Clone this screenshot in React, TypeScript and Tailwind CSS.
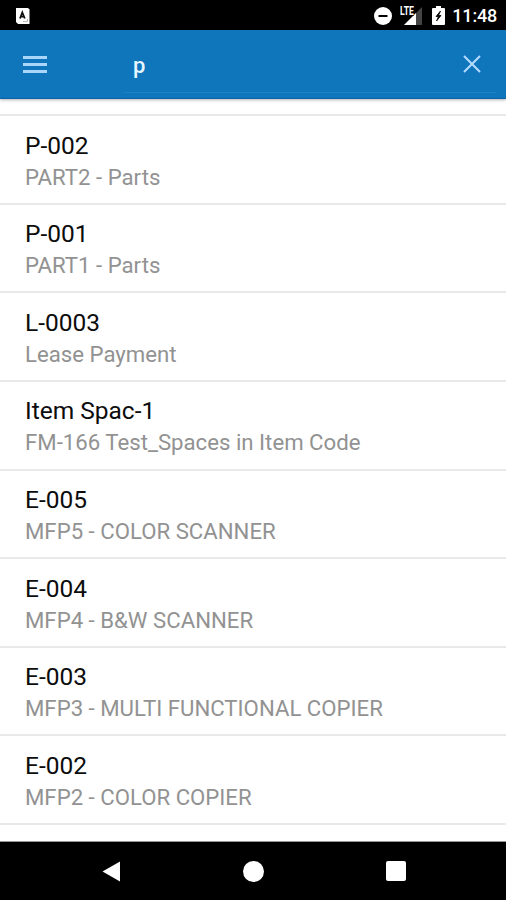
import { useState } from 'react'

interface Item {
  code: string
  description: string
}

const items: Item[] = [
  { code: 'P-002', description: 'PART2 - Parts' },
  { code: 'P-001', description: 'PART1 - Parts' },
  { code: 'L-0003', description: 'Lease Payment' },
  { code: 'Item Spac-1', description: 'FM-166 Test_Spaces in Item Code' },
  { code: 'E-005', description: 'MFP5 - COLOR SCANNER' },
  { code: 'E-004', description: 'MFP4 - B&W SCANNER' },
  { code: 'E-003', description: 'MFP3 - MULTI FUNCTIONAL COPIER' },
  { code: 'E-002', description: 'MFP2 - COLOR COPIER' }
]

function StatusBar() {
  return (
    <div className="flex h-[30px] shrink-0 items-center bg-black pl-4 pr-[9px] pt-px text-white">
      <svg width="14" height="16" viewBox="0 0 14 16">
        <path d="M0 0h12l1.5 1.5V16H2l-2-2z" fill="#fff" />
        <path d="M4 10.5 6.3 4.5l2.5 6M4.8 8.7h3" fill="none" stroke="#111" strokeWidth="1.8" />
        <path d="M7 13.5h4.5V11" fill="none" stroke="#bbb" />
      </svg>

      <div className="ml-auto flex items-center">
        {/* Do not disturb */}
        <svg width="18" height="18" viewBox="0 0 18 18">
          <circle cx="9" cy="9" r="9" fill="#fff" />
          <path d="M4.5 9h9" stroke="#000" strokeWidth="2" />
        </svg>

        {/* Mobile signal */}
        <div className="relative ml-[7px] h-[18px] w-[23px]">
          <svg className="h-full w-full" viewBox="0 0 23 18">
            <path d="M23 0v18H5z" fill="#444" />
            <path d="M17 6v12H5z" fill="#fff" />
          </svg>
          <span className="absolute -top-px left-px origin-left scale-x-[.72] bg-black text-[12px] font-bold leading-[10px]">
            LTE
          </span>
        </div>

        {/* Battery */}
        <svg className="ml-[10px]" width="13" height="19" viewBox="0 0 13 19">
          <path d="M4 0h5v2h3q1 0 1 1v15q0 1-1 1H1q-1 0-1-1V3q0-1 1-1h3z" fill="#fff" />
          <path d="M8.5 5 4 10.5h2.5L4.5 15 9 9.5H6.5z" stroke="#000" strokeWidth=".8" fill="#000" />
        </svg>

        <span className="ml-[7px] pt-px text-[18px] font-medium leading-none tracking-[-0.2px]">11:48</span>
      </div>
    </div>
  )
}

function NavigationBar() {
  return (
    <div className="flex h-[58px] shrink-0 items-center bg-black pl-[102px] pr-[100px]">
      <div className="flex w-full items-center justify-between">
        <button aria-label="Back">
          <svg width="18" height="21" viewBox="0 0 18 21">
            <path d="M18 .5v20L.5 10.5z" fill="#fff" />
          </svg>
        </button>
        <button aria-label="Home" className="size-[21px] rounded-full bg-white" />
        <button aria-label="Recent apps" className="size-5 rounded-[2px] bg-white" />
      </div>
    </div>
  )
}

export default function App() {
  const [query, setQuery] = useState('p')

  return (
    <div className="flex h-[900px] w-[506px] flex-col overflow-hidden bg-white font-[Roboto,sans-serif]">
      <StatusBar />

      <header className="z-10 flex h-[69px] shrink-0 items-center border-b border-[#0a62a8] bg-[#0f76bc] pl-[23px] pr-[10px] shadow-[0_1px_3px_rgba(0,0,0,0.3)]">
        <button aria-label="Menu" className="flex flex-col gap-1">
          <span className="h-[3px] w-6 bg-[#a9d5fb]" />
          <span className="h-[3px] w-6 bg-[#a9d5fb]" />
          <span className="h-[3px] w-6 bg-[#a9d5fb]" />
        </button>
        <div className="ml-[77px] flex h-[58px] flex-1 items-center border-b border-[#2080c4] pl-[9px] pr-[15px]">
          <input
            aria-label="Search"
            value={query}
            onChange={(e) => setQuery(e.target.value)}
            className="min-w-0 flex-1 bg-transparent pt-1 text-[22px] font-medium leading-7 text-[#e8f5ff] outline-none"
          />
          <button aria-label="Clear" onClick={() => setQuery('')}>
            <svg width="18" height="18" viewBox="0 0 18 18">
              <path d="m1 1 16 16M17 1 1 17" stroke="#b5dcfc" strokeWidth="2" />
            </svg>
          </button>
        </div>
      </header>

      <main className="flex-1 overflow-hidden border-b border-[#999] pt-[15px]">
        <ul>
          {items.map((item) => (
            <li key={item.code} className="h-[88.65px] border-t-2 border-[#e9e9e9] pl-[25px] pt-[13.5px]">
              <div className="text-[24.5px] leading-[32px] text-[#0c0c0c]">{item.code}</div>
              <div className="text-[22.2px] leading-[30px] text-[#929292]">{item.description}</div>
            </li>
          ))}
        </ul>
        <div className="border-t-2 border-[#e9e9e9]" />
      </main>

      <NavigationBar />
    </div>
  )
}
